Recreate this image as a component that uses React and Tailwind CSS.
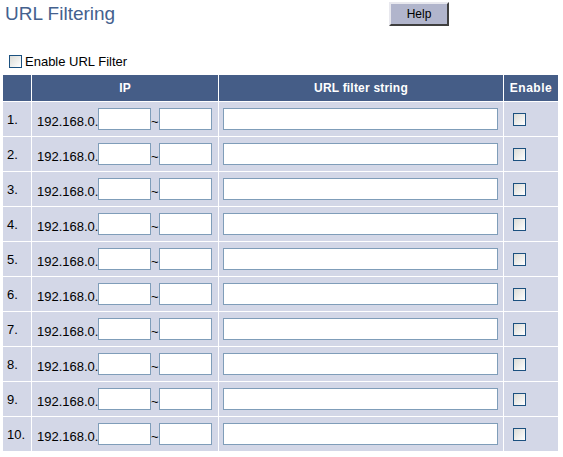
import React from "react";

const rows = [1, 2, 3, 4, 5, 6, 7, 8, 9, 10];

const Check = () => (
  <div className="w-[13px] h-[13px] border border-[#1c5180] bg-linear-to-br from-[#dcdcd7] to-white" />
);

const App = () => {
  return (
    <div className="w-[563px] h-[457px] bg-white pt-[2px] font-['Liberation_Sans',Arial,sans-serif] text-black">
      {/* title + help */}
      <div className="flex h-[24px]">
        <div className="w-[389px] pl-[5px] text-[19px] leading-[24px] text-[#44618e]">
          URL Filtering
        </div>
        <button className="w-[60px] h-[24px] bg-[#b1b5cc] text-[12px] border-2 border-t-[#e8e8ee] border-l-[#e8e8ee] border-b-[#3f3f3f] border-r-[#3f3f3f]">
          Help
        </button>
      </div>

      {/* enable url filter */}
      <div className="flex items-center h-[15px] mt-[28px] pl-[9px] gap-[3px]">
        <Check />
        <span className="text-[13px] leading-[15px]">Enable URL Filter</span>
      </div>

      {/* table */}
      <div className="mt-[6px] ml-[3px] grid grid-cols-[28px_186px_284px_54px] gap-px bg-white">
        <div className="h-[26px] bg-[#455d87]" />
        <div className="h-[26px] bg-[#455d87] flex items-center justify-center text-white font-bold text-[12px]">
          IP
        </div>
        <div className="h-[26px] bg-[#455d87] flex items-center justify-center text-white font-bold text-[12px] tracking-[0.2px]">
          URL filter string
        </div>
        <div className="h-[26px] bg-[#455d87] flex items-center justify-center text-white font-bold text-[12px] tracking-[0.5px]">
          Enable
        </div>

        {rows.map((n) => (
          <React.Fragment key={n}>
            <div className="h-[34px] bg-[#d3d7e7] flex items-center pl-[4px] text-[13px] leading-[15px]">
              {n}.
            </div>
            <div className="h-[34px] bg-[#d3d7e7] flex items-center pl-[5px]">
              <span className="w-[61px] text-[13px] leading-[15px] mt-[5px] whitespace-nowrap">
                192.168.0.
              </span>
              <input
                type="text"
                className="w-[53px] h-[22px] border border-[#7f9db9] bg-white outline-none"
              />
              <span className="w-[8px] text-[13px] leading-[15px] mt-[5px]">~</span>
              <input
                type="text"
                className="w-[53px] h-[22px] border border-[#7f9db9] bg-white outline-none"
              />
            </div>
            <div className="h-[34px] bg-[#d3d7e7] flex items-center pl-[4px]">
              <input
                type="text"
                className="w-[275px] h-[22px] border border-[#7f9db9] bg-white outline-none"
              />
            </div>
            <div className="h-[34px] bg-[#d3d7e7] flex items-center pl-[9px]">
              <Check />
            </div>
          </React.Fragment>
        ))}
      </div>
    </div>
  );
};

export default App;
